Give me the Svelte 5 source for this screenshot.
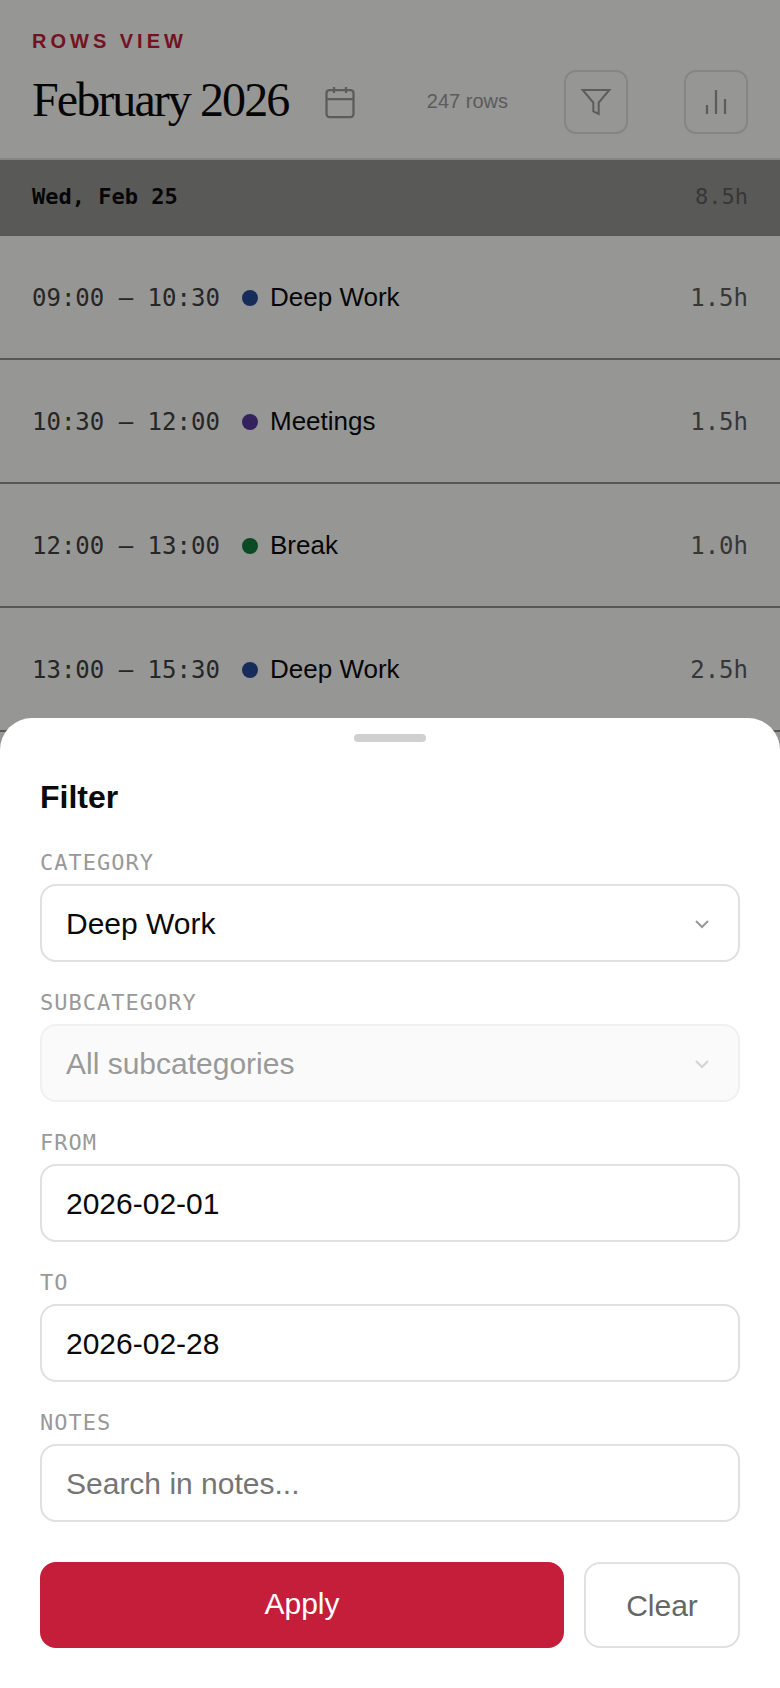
<script lang="ts">
	interface Entry {
		start: string;
		end: string;
		label: string;
		color: string;
		hours: string;
	}

	const entries: Entry[] = [
		{ start: '09:00', end: '10:30', label: 'Deep Work', color: '#254b99', hours: '1.5h' },
		{ start: '10:30', end: '12:00', label: 'Meetings', color: '#553999', hours: '1.5h' },
		{ start: '12:00', end: '13:00', label: 'Break', color: '#157a3e', hours: '1.0h' },
		{ start: '13:00', end: '15:30', label: 'Deep Work', color: '#254b99', hours: '2.5h' }
	];

	let from = $state('2026-02-01');
	let to = $state('2026-02-28');
	let notes = $state('');

	function clear() {
		from = '';
		to = '';
		notes = '';
	}
</script>

{#snippet chevron()}
	<svg class="chevron" viewBox="0 0 24 24" aria-hidden="true">
		<path d="M6 9l6 6 6-6" />
	</svg>
{/snippet}

<div class="screen">
	<header class="header">
		<p class="eyebrow">ROWS VIEW</p>
		<div class="header-row">
			<h1>February 2026</h1>
			<svg class="icon calendar" viewBox="0 0 24 24" aria-hidden="true">
				<rect x="3" y="4" width="18" height="18" rx="2" />
				<path d="M16 2v4M8 2v4M3 10h18" />
			</svg>
			<div class="actions">
				<span class="count">247 rows</span>
				<button class="icon-button" aria-label="Filter">
					<svg class="icon funnel" viewBox="0 0 24 24">
						<polygon points="22 3 2 3 10 12.46 10 19 14 21 14 12.46 22 3" />
					</svg>
				</button>
				<button class="icon-button" aria-label="Chart">
					<svg class="icon" viewBox="0 0 24 24">
						<path d="M18 20V10M12 20V4M6 20v-6" />
					</svg>
				</button>
			</div>
		</div>
	</header>

	<div class="day">
		<span class="day-name">Wed, Feb 25</span>
		<span class="day-total">8.5h</span>
	</div>

	{#each entries as entry}
		<div class="row">
			<span class="time">{entry.start} – {entry.end}</span>
			<span class="dot" style="background: {entry.color}"></span>
			<span class="label">{entry.label}</span>
			<span class="hours">{entry.hours}</span>
		</div>
	{/each}

	<div class="backdrop"></div>

	<section class="sheet">
		<div class="handle"></div>
		<h2>Filter</h2>

		<div class="field">
			<span class="field-label">CATEGORY</span>
			<button class="control select">Deep Work {@render chevron()}</button>
		</div>
		<div class="field">
			<span class="field-label">SUBCATEGORY</span>
			<button class="control select" disabled>All subcategories {@render chevron()}</button>
		</div>
		<div class="field">
			<label class="field-label" for="from">FROM</label>
			<input class="control" id="from" bind:value={from} />
		</div>
		<div class="field">
			<label class="field-label" for="to">TO</label>
			<input class="control" id="to" bind:value={to} />
		</div>
		<div class="field">
			<label class="field-label" for="notes">NOTES</label>
			<input class="control" id="notes" placeholder="Search in notes..." bind:value={notes} />
		</div>

		<div class="buttons">
			<button class="apply">Apply</button>
			<button class="clear" onclick={clear}>Clear</button>
		</div>
	</section>
</div>

<style>
	:global(body) {
		margin: 0;
	}

	.screen {
		position: relative;
		box-sizing: border-box;
		width: 780px;
		height: 1688px;
		overflow: hidden;
		background: #fafaf8;
		font-family: 'Liberation Sans', Arial, sans-serif;
		color: #0a0a0a;
	}

	.screen * {
		box-sizing: border-box;
	}

	button,
	input {
		font-family: inherit;
		margin: 0;
	}

	.header {
		height: 160px;
		padding: 30px 32px 0;
		border-bottom: 2px solid #dededc;
	}

	.eyebrow {
		margin: 0 0 18px;
		font-size: 20px;
		line-height: 22px;
		font-weight: 700;
		letter-spacing: 4px;
		color: #c41e3a;
	}

	.header-row {
		display: flex;
		align-items: center;
		height: 64px;
	}

	h1 {
		margin: 0;
		padding-bottom: 4px;
		font-family: 'Liberation Serif', 'Times New Roman', serif;
		font-size: 48px;
		line-height: 56px;
		font-weight: 400;
		letter-spacing: -0.04em;
		white-space: nowrap;
	}

	.icon {
		display: block;
		width: 36px;
		height: 36px;
		fill: none;
		stroke: #999;
		stroke-width: 1.5;
	}

	.calendar {
		margin-left: 34px;
	}

	.funnel {
		width: 32px;
		height: 32px;
	}

	.actions {
		display: flex;
		align-items: center;
		gap: 56px;
		margin-left: auto;
	}

	.count {
		padding-bottom: 2px;
		font-size: 20px;
		color: #999;
	}

	.icon-button {
		display: flex;
		align-items: center;
		justify-content: center;
		width: 64px;
		height: 64px;
		padding: 0;
		background: none;
		border: 2px solid #dededc;
		border-radius: 12px;
	}

	.day {
		display: flex;
		align-items: center;
		justify-content: space-between;
		height: 76px;
		padding: 0 32px 2px;
		background: #959593;
		border-bottom: 2px solid #91918f;
		font-family: 'DejaVu Sans Mono', monospace;
		font-size: 22px;
	}

	.day-name {
		font-weight: 700;
	}

	.day-total {
		color: #5c5c5c;
	}

	.row {
		display: flex;
		align-items: center;
		height: 124px;
		padding: 0 32px;
		border-bottom: 2px solid #91918f;
	}

	.time,
	.hours {
		padding-top: 2px;
		font-family: 'DejaVu Sans Mono', monospace;
		font-size: 24px;
		white-space: pre;
	}

	.time {
		width: 188px;
		color: #404040;
	}

	.dot {
		width: 16px;
		height: 16px;
		margin: 2px 12px 0 22px;
		border-radius: 50%;
	}

	.label {
		font-size: 26px;
	}

	.hours {
		margin-left: auto;
		color: #5c5c5c;
	}

	.backdrop {
		position: absolute;
		inset: 0;
		background: rgba(0, 0, 0, 0.4);
	}

	.sheet {
		position: absolute;
		left: 0;
		right: 0;
		bottom: 0;
		height: 970px;
		padding: 16px 40px 40px;
		background: #fff;
		border-radius: 32px 32px 0 0;
	}

	.handle {
		width: 72px;
		height: 8px;
		margin: 0 auto;
		border-radius: 4px;
		background: #d0d0d0;
	}

	h2 {
		margin: 36px 0 34px;
		font-size: 32px;
		line-height: 38px;
		font-weight: 700;
	}

	.field {
		margin-bottom: 28px;
	}

	.field-label {
		display: block;
		height: 26px;
		margin-bottom: 8px;
		font-family: 'DejaVu Sans Mono', monospace;
		font-size: 22px;
		line-height: 26px;
		letter-spacing: 1px;
		color: #999;
	}

	.control {
		display: block;
		width: 100%;
		height: 78px;
		padding: 2px 24px 0;
		background: #fff;
		border: 2px solid #e0e0e0;
		border-radius: 16px;
		font-size: 30px;
		color: #0a0a0a;
		outline: none;
	}

	.control::placeholder {
		color: #757575;
	}

	.select {
		display: flex;
		align-items: center;
		justify-content: space-between;
	}

	.select:disabled {
		background: #fafafa;
		border-color: #f0f0f0;
		color: #999;
	}

	.chevron {
		width: 24px;
		height: 24px;
		fill: none;
		stroke: #999;
		stroke-width: 2;
	}

	.select:disabled .chevron {
		opacity: 0.4;
	}

	.buttons {
		display: flex;
		gap: 20px;
		margin-top: 40px;
	}

	.apply,
	.clear {
		height: 86px;
		border-radius: 16px;
		font-size: 30px;
		line-height: 34px;
	}

	.apply {
		flex: 1;
		padding: 25px 0 27px;
		border: none;
		background: #c41e3a;
		color: #fff;
	}

	.clear {
		width: 156px;
		padding: 25px 0 23px;
		background: #fff;
		border: 2px solid #e0e0e0;
		color: #666;
	}
</style>
